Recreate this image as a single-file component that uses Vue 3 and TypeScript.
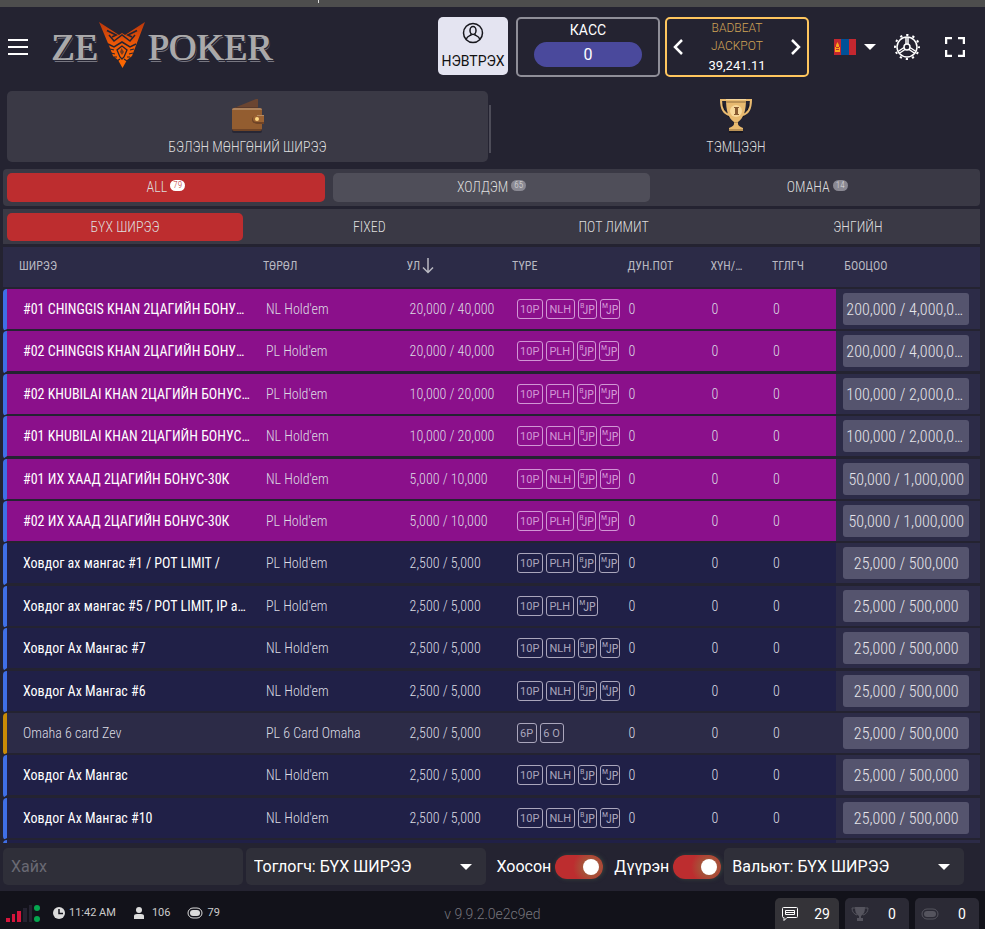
<script setup lang="ts">
import { ref } from 'vue'

interface PokerTable {
  name: string
  game: string
  stakes: string
  tags: string[]
  buyIn: string
  kind: 'bonus' | 'holdem' | 'omaha'
}

const nl = ['10P', 'NLH', 'BJP', 'MJP']
const pl = ['10P', 'PLH', 'BJP', 'MJP']

function row(
  name: string,
  game: string,
  stakes: string,
  tags: string[],
  buyIn: string,
  kind: PokerTable['kind'] = 'holdem',
): PokerTable {
  return { name, game, stakes, tags, buyIn, kind }
}

const tables: PokerTable[] = [
  row('#01 CHINGGIS KHAN 2ЦАГИЙН БОНУС-30К', "NL Hold'em", '20,000 / 40,000', nl, '200,000 / 4,000,000', 'bonus'),
  row('#02 CHINGGIS KHAN 2ЦАГИЙН БОНУС-30К', "PL Hold'em", '20,000 / 40,000', pl, '200,000 / 4,000,000', 'bonus'),
  row('#02 KHUBILAI KHAN 2ЦАГИЙН БОНУС-30К', "PL Hold'em", '10,000 / 20,000', pl, '100,000 / 2,000,000', 'bonus'),
  row('#01 KHUBILAI KHAN 2ЦАГИЙН БОНУС-30К', "NL Hold'em", '10,000 / 20,000', nl, '100,000 / 2,000,000', 'bonus'),
  row('#01 ИХ ХААД 2ЦАГИЙН БОНУС-30К', "NL Hold'em", '5,000 / 10,000', nl, '50,000 / 1,000,000', 'bonus'),
  row('#02 ИХ ХААД 2ЦАГИЙН БОНУС-30К', "PL Hold'em", '5,000 / 10,000', pl, '50,000 / 1,000,000', 'bonus'),
  row('Ховдог ах мангас #1 / POT LIMIT /', "PL Hold'em", '2,500 / 5,000', pl, '25,000 / 500,000'),
  row('Ховдог ах мангас #5 / POT LIMIT, IP active', "PL Hold'em", '2,500 / 5,000', ['10P', 'PLH', 'MJP'], '25,000 / 500,000'),
  row('Ховдог Ах Мангас #7', "NL Hold'em", '2,500 / 5,000', nl, '25,000 / 500,000'),
  row('Ховдог Ах Мангас #6', "NL Hold'em", '2,500 / 5,000', nl, '25,000 / 500,000'),
  row('Omaha 6 card Zev', 'PL 6 Card Omaha', '2,500 / 5,000', ['6P', '6 O'], '25,000 / 500,000', 'omaha'),
  row('Ховдог Ах Мангас', "NL Hold'em", '2,500 / 5,000', nl, '25,000 / 500,000'),
  row('Ховдог Ах Мангас #10', "NL Hold'em", '2,500 / 5,000', nl, '25,000 / 500,000'),
  row('Ховдог Ах Мангас #9', "NL Hold'em", '2,500 / 5,000', nl, '25,000 / 500,000'),
]

const games = [
  { label: 'ALL', count: 79 },
  { label: 'ХОЛДЭМ', count: 65 },
  { label: 'ОМАНА', count: 14 },
]
const limits = ['БҮХ ШИРЭЭ', 'FIXED', 'ПОТ ЛИМИТ', 'ЭНГИЙН']

const activeGame = ref(0)
const activeLimit = ref(0)
const search = ref('')
const showEmpty = ref(true)
const showFull = ref(true)
</script>

<template>
  <div class="app">
    <div class="strip"><span></span></div>

    <header class="header">
      <button class="icon-btn menu" aria-label="Menu">
        <svg width="20" height="16" viewBox="0 0 20 16" stroke="#fff" stroke-width="2"><path d="M0 1h20M0 8h20M0 15h20" /></svg>
      </button>
      <a class="logo" href="#">
        <span>ZE</span>
        <svg width="46" height="46" viewBox="0 0 46 46">
          <defs>
            <linearGradient id="flame" x1="0" y1="0" x2="0" y2="1">
              <stop offset="0" stop-color="#b9360b" />
              <stop offset=".5" stop-color="#ee5a08" />
              <stop offset="1" stop-color="#ff6a00" />
            </linearGradient>
          </defs>
          <path fill="url(#flame)" d="M0 0 20 13 23 11 26 13 46 0 36 26 33 34 28 38 23.500 46 19 38 14 34 11 26Z" />
          <g fill="none" stroke="#242331">
            <path stroke-width="1.800" d="M8 8.500 17 13l-4 2M38 8.500 29 13l4 2" />
            <path stroke-width="1.500" d="m10 13 5 6 8-6 8 6 5-6" />
            <path stroke-width="1.500" d="m9 22 6 3 8-5 8 5 6-3" />
            <path stroke-width="1.300" d="m23 24-5 4 3 7 2 2 2-2 3-7z" />
            <path stroke-width="1.200" d="m11 27 4 1m-3 3 4 1m-1 3 3 0m0 4 3-2M35 27l-4 1m3 3-4 1m1 3-3 0m0 4-3-2" />
          </g>
          <path d="m22.500 26-1.500 4 2 3 2-3z" fill="#242331" opacity=".6" />
        </svg>
        <span>POKER</span>
      </a>

      <button class="login">
        <svg width="22" height="22" viewBox="0 0 22 22" fill="none" stroke="#17171d" stroke-width="1.500">
          <circle cx="11" cy="11" r="9.500" />
          <ellipse cx="11" cy="8.500" rx="3" ry="4" />
          <path d="M4 17.500c1-3 3-3.500 5-4.500v-1m9 5.500c-1-3-3-3.500-5-4.500v-1" />
        </svg>
        <span>НЭВТРЭХ</span>
      </button>

      <button class="cash">
        <span>КАСС</span>
        <span class="cash-amount">0</span>
      </button>

      <section class="jackpot">
        <button class="icon-btn" aria-label="Previous">
          <svg width="12" height="18" viewBox="0 0 12 18" fill="none" stroke="#fff" stroke-width="2.500"><path d="M10 2 3 9l7 7" /></svg>
        </button>
        <div class="jackpot-text">
          <span>BADBEAT</span>
          <span>JACKPOT</span>
          <strong>39,241.11</strong>
        </div>
        <button class="icon-btn" aria-label="Next">
          <svg width="12" height="18" viewBox="0 0 12 18" fill="none" stroke="#fff" stroke-width="2.500"><path d="m2 2 7 7-7 7" /></svg>
        </button>
      </section>

      <button class="icon-btn lang" aria-label="Language">
        <svg width="22" height="16" viewBox="0 0 22 16">
          <path fill="#c4272f" d="M0 0h22v16H0z" />
          <path fill="#015197" d="M7 0h8v16H7z" />
          <path fill="#f9a51b" d="M1 8h1v5H1zm4 0h1v5H5zM2 11h3v2H2zm0-2h3v1H2zM3.500 3 5 6v2H2V6z" />
        </svg>
        <svg width="12" height="6" viewBox="0 0 12 6"><path fill="#fff" d="M0 0h12L6 6z" /></svg>
      </button>
      <button class="icon-btn gear" aria-label="Settings">
        <svg width="26" height="26" viewBox="0 0 26 26" fill="none" stroke="#fff">
          <circle cx="13" cy="13" r="10" stroke-width="1.500" />
          <circle cx="13" cy="13" r="3" stroke-width="1.500" />
          <path stroke-width="1.500" d="M12 10V3m2 7V3m-4 10.500-6 4m7-2-6 4m11-6 6 4m-7-2 6 4" />
          <circle cx="13" cy="13" r="12" stroke-width="2" stroke-dasharray="2.280 4" stroke-dashoffset="1.140" />
        </svg>
      </button>
      <button class="icon-btn full" aria-label="Full screen">
        <svg width="20" height="20" viewBox="0 0 20 20" fill="none" stroke="#fff" stroke-width="2.500"><path d="M1 7V1h6m6 0h6v6m0 6v6h-6m-6 0H1v-6" /></svg>
      </button>
    </header>

    <nav class="modes">
      <button class="mode active">
        <svg width="34" height="36" viewBox="0 0 34 36">
          <path fill="#6b4531" d="M3 10 25 1h2v9z" />
          <path fill="#5a3a2b" d="M5 9h22v2H3z" />
          <rect x="1" y="30" width="30" height="5" rx="2" fill="#282735" />
          <rect x="1" y="10" width="30" height="23" rx="2" fill="#6f4427" />
          <path fill="#935d30" d="M1 12h30v19H1z" />
          <path fill="#ad825c" d="M3 10h26q2 0 2 2H1q0-2 2-2" />
          <path fill="#6f4427" d="M26 17h7v9h-7q-5-1-5-4 0-4 5-5" />
          <path fill="#9c6333" d="M26 17h7v7h-7q-4 0-4-3 0-4 4-4" />
          <path fill="#b38a64" d="M26 17h7v1h-7z" />
          <circle cx="26" cy="21" r="2" fill="#ffd983" />
        </svg>
        <span>БЭЛЭН МӨНГӨНИЙ ШИРЭЭ</span>
      </button>
      <button class="mode">
        <svg width="34" height="36" viewBox="0 0 34 36">
          <path fill="#181722" d="M10 32h14v3H10z" />
          <path fill="none" stroke="#181722" stroke-width="1.500" d="M4 6c1 8 4 13 9 14M30 6c-1 8-4 13-9 14" />
          <path fill="none" stroke="#e8ba70" stroke-width="2" d="M8 2H2c0 9 3 14 9 15M26 2h6c0 9-3 14-9 15" />
          <path fill="#e8ba70" d="M7 1h20c0 11-2 19-8 23v2q0 2 5 4v3H10v-3q5-2 5-4v-2C9 20 7 12 7 1" />
          <path fill="#ba9256" d="M7 3h20v2H7zm8 21h4v1h-4zm-5 7h14v2H10z" />
          <path fill="#f3d59c" d="M7 1h20v1H7z" />
          <circle cx="17" cy="13" r="6" fill="#f8d99b" />
          <path fill="#885b32" d="M15 9h5v1h-1v6h1v1h-5v-1h1v-6h-1z" />
        </svg>
        <span>ТЭМЦЭЭН</span>
      </button>
    </nav>

    <nav class="bar games">
      <button
        v-for="(g, i) in games"
        :key="g.label"
        :class="{ active: activeGame === i, hover: i === 1 && activeGame !== 1 }"
        @click="activeGame = i"
      >
        {{ g.label }}<sup>{{ g.count }}</sup>
      </button>
    </nav>

    <nav class="bar limits">
      <button v-for="(l, i) in limits" :key="l" :class="{ active: activeLimit === i }" @click="activeLimit = i">{{ l }}</button>
    </nav>

    <main class="lobby">
      <table>
        <colgroup>
          <col class="c-name" /><col class="c-game" /><col class="c-stakes" /><col class="c-type" />
          <col class="c-pot" /><col class="c-hands" /><col class="c-players" /><col class="c-buy" />
        </colgroup>
        <thead>
          <tr>
            <th>ШИРЭЭ</th>
            <th>ТӨРӨЛ</th>
            <th>
              <span class="sorted">УЛ<svg width="12" height="16" viewBox="0 0 12 16" fill="none" stroke="currentColor" stroke-width="1.500"><path d="M6 0v14M1 9.500l5 5 5-5" /></svg></span>
            </th>
            <th>TYPE</th>
            <th>ДУН.ПОТ</th>
            <th>ХҮН/ЦАГ</th>
            <th>ТГЛГЧ</th>
            <th>БООЦОО</th>
          </tr>
        </thead>
        <tbody>
          <tr v-for="t in tables" :key="t.name" :class="t.kind">
            <td>{{ t.name }}</td>
            <td class="info">{{ t.game }}</td>
            <td class="info">{{ t.stakes }}</td>
            <td>
              <div class="tags">
                <span v-for="tag in t.tags" :key="tag" class="tag" :class="{ jp: tag.endsWith('JP') }">
                  <template v-if="tag.endsWith('JP')"><i>{{ tag[0] }}</i><b>JP</b></template>
                  <template v-else>{{ tag }}</template>
                </span>
              </div>
            </td>
            <td class="num">0</td>
            <td class="num">0</td>
            <td class="num">0</td>
            <td><button class="buy">{{ t.buyIn }}</button></td>
          </tr>
        </tbody>
      </table>
    </main>

    <form class="filters" @submit.prevent>
      <input v-model="search" class="field" type="text" placeholder="Хайх" aria-label="Хайх" />
      <div class="field select">
        <select aria-label="Тоглогч"><option>Тоглогч: БҮХ ШИРЭЭ</option></select>
        <svg width="12" height="6" viewBox="0 0 12 6"><path fill="#fff" d="M0 0h12L6 6z" /></svg>
      </div>
      <label class="toggle">Хоосон<input v-model="showEmpty" type="checkbox" /></label>
      <label class="toggle">Дүүрэн<input v-model="showFull" type="checkbox" /></label>
      <div class="field select">
        <select aria-label="Вальют"><option>Вальют: БҮХ ШИРЭЭ</option></select>
        <svg width="12" height="6" viewBox="0 0 12 6"><path fill="#fff" d="M0 0h12L6 6z" /></svg>
      </div>
    </form>

    <footer class="status">
      <div class="stats">
        <svg width="36" height="18" viewBox="0 0 36 18">
          <path fill="#d5153c" d="M0 14h4v4H0zm6-4h3v8H6zm5-3h4v11h-4z" />
          <path fill="#252331" d="M17 4h4v14h-4zm6-3h3v17h-3z" />
          <circle cx="31" cy="4" r="3" fill="#05a64f" />
          <circle cx="31" cy="15" r="3" fill="#05a64f" />
        </svg>
        <span class="stat">
          <svg width="12" height="12" viewBox="0 0 12 12"><circle cx="6" cy="6" r="6" fill="#dcdcdc" /><path d="M6 2v4.500h4" fill="none" stroke="#12121a" stroke-width="1.500" /></svg>
          11:42 AM
        </span>
        <span class="stat people">
          <svg width="12" height="12" viewBox="0 0 12 12" fill="#dcdcdc"><circle cx="6" cy="3" r="3" /><path d="M1 12V9q0-2 3-2h4q3 0 3 2v3z" /></svg>
          106
        </span>
        <span class="stat">
          <svg width="16" height="12" viewBox="0 0 16 12"><rect x="1" y="1" width="14" height="10" rx="5" fill="none" stroke="#dcdcdc" /><rect x="3" y="3" width="10" height="6" rx="3" fill="#dcdcdc" /></svg>
          79
        </span>
      </div>
      <span class="version">v 9.9.2.0e2c9ed</span>
      <div class="counters">
        <button class="on">
          <svg width="18" height="14" viewBox="0 0 18 14" fill="none" stroke="#fff"><path d="M2.500 .5h13q1 0 1 1v8q0 1-1 1H6l-3 3v-3h-.5q-1 0-1-1v-8q0-1 1-1z" /><path d="M4.500 3.500h9v4h-9zM4 5.500h10" /></svg>
          <span>29</span>
        </button>
        <button>
          <svg width="18" height="14" viewBox="0 0 18 14" fill="#55545e"><path d="M4 0h10c0 5-1 7-4 9v2h2v3H6v-3h2V9C5 7 4 5 4 0" /><path d="M4 1H1c0 4 2 6 5 7M14 1h3c0 4-2 6-5 7" fill="none" stroke="#55545e" /></svg>
          <span>0</span>
        </button>
        <button>
          <svg width="18" height="14" viewBox="0 0 18 14"><rect x="1" y="2" width="16" height="10" rx="5" fill="none" stroke="#55545e" /><rect x="3" y="4" width="12" height="6" rx="3" fill="#55545e" /></svg>
          <span>0</span>
        </button>
      </div>
    </footer>
  </div>
</template>

<style>
body {
  background: #242331;
}
</style>

<style scoped>
.app {
  --cond: 'Roboto Condensed', Roboto, sans-serif;
  display: flex;
  flex-direction: column;
  height: 100vh;
  overflow: hidden;
  background: #242331;
  color: #fff;
  font-family: Roboto, sans-serif;
}
.app *,
.app {
  box-sizing: border-box;
}
button,
input,
select {
  margin: 0;
  padding: 0;
  border: 0;
  background: none;
  color: inherit;
  font: inherit;
}
svg {
  display: block;
  flex: none;
}
.strip {
  flex: none;
  height: 7px;
  background: #4d4d4d;
}
.strip span {
  display: block;
  width: 1px;
  height: 3px;
  margin-left: 318px;
  background: #ddd;
}

/* header */
.header {
  display: flex;
  align-items: center;
  flex: none;
  height: 80px;
  padding: 0 20px 0 8px;
}
.logo {
  display: flex;
  align-items: center;
  gap: 2px;
  margin: 0 auto 0 23px;
  color: #aaa9aa;
  font: 38px/46px 'Liberation Serif', serif;
  text-decoration: none;
  text-shadow: 1px 0 0 #aaa9aa, 2px 1px 0 #242331, 2px 2px 0 #777680;
}
.logo svg {
  margin-bottom: 4px;
}
.login,
.cash,
.jackpot {
  height: 60px;
  border-radius: 5px;
}
.login {
  display: flex;
  flex-direction: column;
  align-items: center;
  width: 70px;
  height: 58px;
  padding-top: 5px;
  margin: 0 8px 2px 0;
  background: #e4e4f1;
  color: #111;
  font-size: 14px;
  line-height: 34px;
}
.cash {
  display: flex;
  flex-direction: column;
  align-items: center;
  width: 144px;
  margin-right: 5px;
  border: 2px solid #8f8e98;
  font-size: 14px;
  line-height: 23px;
}
.cash-amount {
  width: 108px;
  height: 25px;
  border-radius: 13px;
  background: #4a499c;
  font-size: 16px;
  line-height: 25px;
}
.jackpot {
  display: flex;
  align-items: center;
  justify-content: space-between;
  width: 144px;
  padding: 0 5px;
  border: 2px solid #ffc65e;
}
.jackpot-text {
  display: flex;
  flex-direction: column;
  align-items: center;
  color: #d0a456;
  font-size: 12px;
  font-weight: 300;
  line-height: 18px;
}
.jackpot-text strong {
  color: #fff;
  font-size: 13px;
  font-weight: 400;
  line-height: 21px;
}
.lang {
  display: flex;
  align-items: center;
  gap: 8px;
  margin-left: 25px;
}
.gear {
  margin: 0 25px 0 18px;
}

/* cash tables / tournaments */
.modes {
  display: grid;
  grid-template-columns: 1fr 1fr;
  flex: none;
  height: 71px;
  margin: 4px 6px 7px 7px;
}
.mode {
  display: flex;
  flex-direction: column;
  align-items: center;
  justify-content: center;
  gap: 4px;
  position: relative;
  border-radius: 5px;
  color: #ddd;
  font: 300 14px/18px var(--cond);
}
.mode.active {
  margin-right: 5px;
  background: #3a3945;
}
.mode.active::after {
  content: '';
  position: absolute;
  top: 14px;
  right: -3px;
  width: 2px;
  height: 48px;
  background: #4d4c58;
}

.bar {
  display: grid;
  grid-auto-flow: column;
  grid-auto-columns: 1fr;
  gap: 8px;
  flex: none;
  margin: 0 5px 3px 3px;
  padding: 4px;
  background: #3a3945;
}
.bar button {
  height: 28px;
  border-radius: 5px;
  color: #ddd;
  font: 300 14px/28px var(--cond);
}
.limits {
  padding-bottom: 3px;
}
.games {
  border-radius: 4px;
}
.games button {
  height: 29px;
  padding-bottom: 1px;
}
.bar .active {
  background: #bd2d2f;
}
.bar .hover {
  background: #4f4e59;
}
.bar sup {
  display: inline-block;
  margin-left: 3px;
  padding: 0 3px;
  border-radius: 6px;
  background: #8a8993;
  color: #ddd;
  font-size: 9px;
  line-height: 11px;
  vertical-align: 4px;
}
.bar .active sup {
  background: #fff;
  color: #bd2d2f;
}

/* lobby list */
.lobby {
  flex: 1;
  min-height: 0;
  margin: 0 5px 5px 3px;
  overflow: hidden;
}
table {
  width: 100%;
  table-layout: fixed;
  border-collapse: separate;
  border-spacing: 0;
  font-family: var(--cond);
}
.c-name { width: 26.2%; }
.c-game { width: 14.7%; }
.c-stakes { width: 10.8%; }
.c-type { width: 11.8%; }
.c-pot { width: 8.5%; }
.c-hands { width: 6.3%; }
.c-players { width: 7%; }
.c-buy { width: 14.7%; }
th,
td {
  height: 42px;
  padding: 0 3px 0 6px;
  border-bottom: 2px solid #242331;
  overflow: hidden;
  text-align: left;
  text-overflow: ellipsis;
  white-space: nowrap;
}
th {
  padding: 0 22px 2px 4px;
  background: #2c2b47;
  color: #b9b9c2;
  font-size: 12px;
  font-weight: 400;
}
th:first-child {
  padding-left: 16px;
}
th:last-child {
  padding-left: 8px;
}
.sorted {
  display: flex;
  align-items: center;
  gap: 2px;
}
td {
  background: #202047;
  color: #dcdce4;
  font-size: 14px;
  font-weight: 300;
}
.info {
  padding-left: 7px;
}
.num {
  padding-left: 5px;
}
tr:nth-child(5n + 2) td,
tr:nth-child(5n + 4) td {
  height: 43px;
  border-bottom-width: 3px;
}
td:first-child {
  padding: 0 9px 0 16px;
  border-left: 4px solid #3f6fe6;
  border-radius: 4px 0 0 4px;
  color: #fff;
  font-weight: 400;
}
.bonus td {
  background: #8b108b;
}
.omaha td {
  background: #2c2b47;
}
.omaha td:first-child {
  border-left-color: #c98b06;
  color: #dcdce4;
  font-weight: 300;
}
tbody td:last-child {
  padding: 0 11px 0 7px;
  background: #2c2b47;
}
.tags {
  display: flex;
  align-items: center;
  gap: 3px;
  margin-left: 3px;
  overflow: hidden;
}
.tag {
  display: flex;
  flex: none;
  height: 20px;
  padding: 0 3px 0 2px;
  border: 1px solid #aaa6bc;
  border-radius: 3px;
  color: #aaa6bc;
  font: 11px/20px Roboto, sans-serif;
}
.bonus .tag {
  border-color: #d197d5;
  color: #d197d5;
}
.tag.jp {
  padding: 0 1px;
  font-family: var(--cond);
}
.tag i {
  font-size: 8px;
  font-style: normal;
  line-height: 12px;
}
.tag b {
  margin-left: -2px;
  font-size: 12px;
  font-weight: 400;
}
.buy {
  display: block;
  width: 100%;
  height: 32px;
  padding: 0 3px;
  overflow: hidden;
  border-radius: 3px;
  background: #55546e;
  color: #e5e5ea;
  font-size: 16px;
  text-overflow: ellipsis;
}

/* filters */
.filters {
  display: flex;
  align-items: center;
  gap: 3px;
  flex: none;
  height: 37px;
  margin: 0 21px 6px 3px;
  font-size: 16px;
}
.field {
  flex: 1 1 240px;
  width: 0;
  min-width: 0;
  height: 100%;
  padding: 0 8px;
  border-radius: 5px;
  background: #2f2f39;
}
.field::placeholder {
  color: #696973;
}
.select {
  display: flex;
  align-items: center;
  padding-right: 14px;
}
.select select {
  flex: 1;
  min-width: 0;
  appearance: none;
}
.toggle {
  display: flex;
  align-items: center;
  gap: 4px;
  margin-left: 8px;
}
.toggle input {
  width: 48px;
  height: 24px;
  border-radius: 12px;
  appearance: none;
  background: #4d4c58;
}
.toggle input::before {
  content: '';
  display: block;
  width: 16px;
  height: 16px;
  margin: 4px;
  border-radius: 50%;
  background: #fff;
}
.toggle input:checked {
  background: radial-gradient(circle at 36px 12px, #a4553a 8px, #bd2d2f 18px);
  box-shadow: 1px 0 4px #38463f;
}
.toggle input:checked::before {
  margin-left: 28px;
}

/* status bar */
.status {
  display: grid;
  grid-template-columns: 1fr auto 1fr;
  align-items: start;
  flex: none;
  height: 38px;
  padding: 0 6px;
  background: #12121a;
}
.stats {
  display: flex;
  align-items: center;
  gap: 17px;
  height: 43px;
  color: #ccc;
  font-size: 11px;
}
.stats > svg {
  margin-right: -6px;
}
.stat {
  display: flex;
  align-items: center;
  gap: 4px;
}
.people {
  gap: 7px;
}
.version {
  color: #77767d;
  font-size: 14px;
  font-weight: 300;
  line-height: 46px;
}
.counters {
  display: flex;
  justify-content: flex-end;
  gap: 6px;
}
.counters button {
  display: flex;
  align-items: center;
  justify-content: space-between;
  width: 64px;
  height: 31px;
  margin-top: 7px;
  padding-left: 6px;
  border-radius: 5px 5px 0 0;
  background: #2b2a35;
  font-size: 14px;
}
.counters span {
  width: 34px;
  text-align: center;
}
.counters .on {
  background: #343338;
}
</style>
